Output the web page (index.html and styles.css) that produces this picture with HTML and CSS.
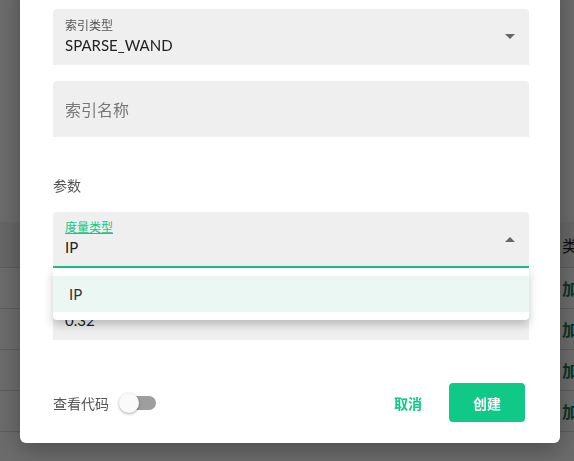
FILE: index.html
```html
<!DOCTYPE html>
<html lang="zh-CN">
<head>
  <meta charset="utf-8">
  <title>创建索引</title>
  <link rel="stylesheet" href="styles.css">
</head>
<body>

  <!-- page behind the dialog -->
  <div class="page">
    <div class="table-head"><span class="col-end">类型</span></div>
    <div class="table-row"><span class="col-end action">加载</span></div>
    <div class="table-row"><span class="col-end action">加载</span></div>
    <div class="table-row"><span class="col-end action">加载</span></div>
    <div class="table-row"><span class="col-end action">加载</span></div>
  </div>

  <div class="overlay">
    <div class="dialog">

      <div class="field">
        <div class="field-label">索引类型</div>
        <div class="field-value">SPARSE_WAND</div>
        <span class="arrow"></span>
      </div>

      <div class="field">
        <div class="field-placeholder">索引名称</div>
      </div>

      <div class="section-title">参数</div>

      <div class="select-wrap">
        <div class="field focused">
          <div class="field-label">度量类型</div>
          <div class="field-value">IP</div>
          <span class="arrow up"></span>
        </div>
        <div class="menu">
          <div class="menu-item">IP</div>
        </div>
      </div>

      <div class="field">
        <div class="field-label">drop_ratio_build</div>
        <div class="field-value">0.32</div>
      </div>

      <div class="footer">
        <div class="code-toggle">
          <span>查看代码</span>
          <span class="switch"><span class="knob"></span></span>
        </div>
        <div class="actions">
          <button class="btn-text">取消</button>
          <button class="btn-primary">创建</button>
        </div>
      </div>

    </div>
  </div>

</body>
</html>
```

FILE: styles.css
```css
* {
  box-sizing: border-box;
  font-family: Lato, "Noto Sans CJK SC", sans-serif;
}

body {
  margin: 0;
  background: #fff;
  overflow: hidden;
}

/* background table */
.page {
  padding-top: 222px;
}

.table-head,
.table-row {
  height: 41px;
  border-bottom: 1px solid #ddd;
  display: flex;
  align-items: center;
  justify-content: flex-end;
  font-size: 16px;
  color: #222;
}

.table-head {
  height: 46px;
  background: #f3f3f3;
}

.col-end {
  margin-right: -20px;
}

.action {
  color: #1a7a4f;
  font-weight: 700;
}

/* dialog */
.overlay {
  position: fixed;
  inset: 0;
  background: rgba(0, 0, 0, 0.58);
}

.dialog {
  position: absolute;
  left: 20px;
  top: -20px;
  width: 540px;
  background: #fff;
  border-radius: 6px;
  padding: 29px 31px 21px 33px;
  box-shadow: 0 6px 24px rgba(0, 0, 0, 0.3);
}

.field {
  position: relative;
  height: 56px;
  background: #efefef;
  border-radius: 4px 4px 0 0;
  padding: 0 12px;
  display: flex;
  flex-direction: column;
  justify-content: center;
  margin-bottom: 16px;
}

.field-label {
  font-size: 12px;
  line-height: 16px;
  color: #555;
}

.field-value {
  font-size: 15px;
  line-height: 22px;
  color: #222;
}

.field-placeholder {
  font-size: 16px;
  color: #777;
}

.arrow {
  position: absolute;
  right: 14px;
  top: 25px;
  width: 0;
  height: 0;
  border-left: 5px solid transparent;
  border-right: 5px solid transparent;
  border-top: 5px solid #666;
}

.arrow.up {
  border-top: none;
  border-bottom: 5px solid #666;
}

.section-title {
  font-size: 14px;
  color: #555;
  margin: 39px 0 16px;
  line-height: 20px;
}

.select-wrap {
  position: relative;
}

.field.focused {
  border-bottom: 2px solid #18bf87;
}

.field.focused .field-label {
  color: #10c987;
  text-decoration: underline;
}

.menu {
  position: absolute;
  left: 0;
  right: 0;
  top: 56px;
  background: #fff;
  padding: 8px 0;
  border-radius: 0 0 4px 4px;
  box-shadow: 0 5px 10px rgba(0, 0, 0, 0.22);
  z-index: 2;
}

.menu-item {
  height: 36px;
  line-height: 36px;
  padding-left: 16px;
  font-size: 15px;
  color: #333;
  background: #eaf7f2;
}

.footer {
  display: flex;
  align-items: center;
  justify-content: space-between;
  margin-top: 43px;
  padding-right: 4px;
}

.code-toggle {
  display: flex;
  align-items: center;
  font-size: 14px;
  color: #555;
}

.switch {
  position: relative;
  width: 32px;
  height: 14px;
  border-radius: 7px;
  background: #9e9e9e;
  margin-left: 15px;
}

.knob {
  position: absolute;
  left: -5px;
  top: -3px;
  width: 20px;
  height: 20px;
  border-radius: 50%;
  background: #fafafa;
  box-shadow: 0 1px 3px rgba(0, 0, 0, 0.35);
}

.actions {
  display: flex;
  align-items: center;
  gap: 27px;
}

button {
  font-size: 14px;
  font-weight: 700;
  border: none;
  cursor: pointer;
}

.btn-text {
  background: none;
  color: #10c987;
  padding: 0;
}

.btn-primary {
  background: #10c987;
  color: #fff;
  width: 76px;
  height: 39px;
  border-radius: 4px;
}
```
